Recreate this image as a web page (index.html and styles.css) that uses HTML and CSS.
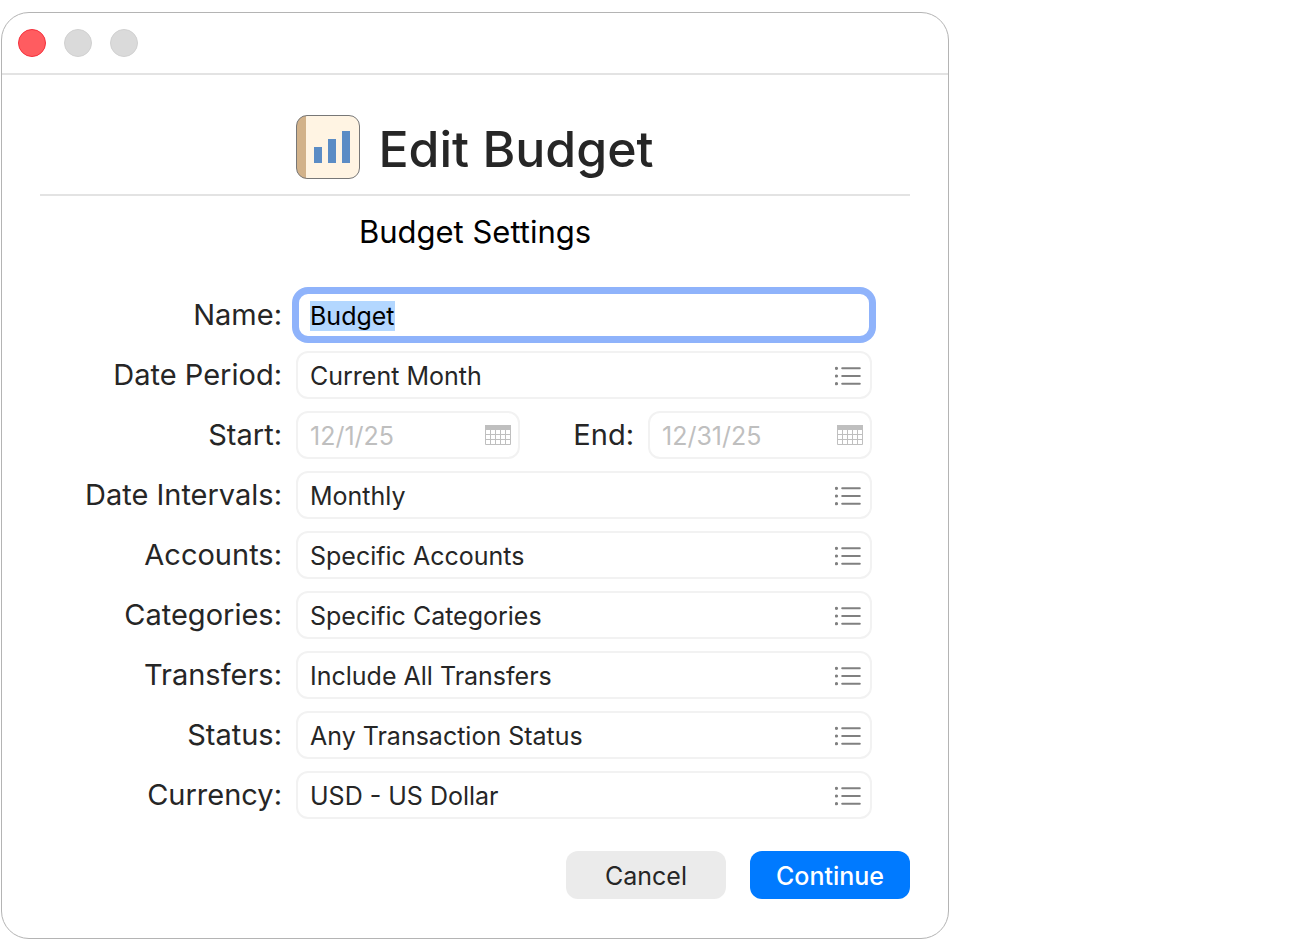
FILE: index.html
```
<!DOCTYPE html>
<html lang="en">
<head>
    <meta charset="utf-8">
    <title>Edit Budget</title>
    <link rel="stylesheet" href="styles.css">
</head>
<body>
    <svg class="symbols" aria-hidden="true">
        <symbol id="list" viewBox="0 0 26 20">
            <g fill="#808080">
                <circle cx="1.5" cy="2.3" r="1.6"/>
                <circle cx="1.5" cy="10" r="1.6"/>
                <circle cx="1.5" cy="17.7" r="1.6"/>
            </g>
            <path d="M7.2 2.3H24.8M7.2 10H24.8M7.2 17.7H24.8" stroke="#808080" stroke-width="2" stroke-linecap="round"/>
        </symbol>
        <symbol id="calendar" viewBox="0 0 26 20">
            <path d="M0 0H26V5H0Z" fill="#bfbfbf"/>
            <path d="M.5 5V19.5H25.5V5M5.5 5V19M10.5 5V19M15.5 5V19M20.5 5V19M0 9.5H26M0 14.5H26" fill="none" stroke="#bfbfbf"/>
        </symbol>
    </svg>

    <div class="window">
        <div class="titlebar">
            <button class="light close" type="button" aria-label="Close"></button>
            <button class="light" type="button" aria-label="Minimize" disabled></button>
            <button class="light" type="button" aria-label="Zoom" disabled></button>
        </div>
        <div class="content">
            <div class="header">
                <svg class="book" viewBox="0 0 64 64" aria-hidden="true">
                    <rect x=".5" y=".5" width="63" height="63" rx="10.5" fill="#fff4e3"/>
                    <path d="M10 .5H11A10.5 10.5 0 0 0 .5 11V53A10.5 10.5 0 0 0 11 63.5H10Z" fill="#d2b28a"/>
                    <rect x="18" y="32" width="8" height="16" fill="#5b8cc5"/>
                    <rect x="32" y="24" width="8" height="24" fill="#5b8cc5"/>
                    <rect x="46" y="16" width="8" height="32" fill="#5b8cc5"/>
                    <rect x=".5" y=".5" width="63" height="63" rx="10.5" fill="none" stroke="#777"/>
                </svg>
                <h1>Edit Budget</h1>
            </div>
            <h2>Budget Settings</h2>
            <form>
                <label for="name">Name:</label>
                <div class="field">
                    <input id="name" type="text" value="Budget" autocomplete="off" spellcheck="false">
                </div>

                <label for="period">Date Period:</label>
                <div class="field">
                    <select id="period"><option>Current Month</option></select>
                    <svg class="icon"><use href="#list"/></svg>
                </div>

                <label for="start">Start:</label>
                <div class="dates">
                    <div class="field">
                        <input id="start" type="text" value="12/1/25" disabled>
                        <svg class="icon calendar"><use href="#calendar"/></svg>
                    </div>
                    <label for="end">End:</label>
                    <div class="field">
                        <input id="end" type="text" value="12/31/25" disabled>
                        <svg class="icon calendar"><use href="#calendar"/></svg>
                    </div>
                </div>

                <label for="intervals">Date Intervals:</label>
                <div class="field">
                    <select id="intervals"><option>Monthly</option></select>
                    <svg class="icon"><use href="#list"/></svg>
                </div>

                <label for="accounts">Accounts:</label>
                <div class="field">
                    <select id="accounts"><option>Specific Accounts</option></select>
                    <svg class="icon"><use href="#list"/></svg>
                </div>

                <label for="categories">Categories:</label>
                <div class="field">
                    <select id="categories"><option>Specific Categories</option></select>
                    <svg class="icon"><use href="#list"/></svg>
                </div>

                <label for="transfers">Transfers:</label>
                <div class="field">
                    <select id="transfers"><option>Include All Transfers</option></select>
                    <svg class="icon"><use href="#list"/></svg>
                </div>

                <label for="status">Status:</label>
                <div class="field">
                    <select id="status"><option>Any Transaction Status</option></select>
                    <svg class="icon"><use href="#list"/></svg>
                </div>

                <label for="currency">Currency:</label>
                <div class="field">
                    <select id="currency"><option>USD - US Dollar</option></select>
                    <svg class="icon"><use href="#list"/></svg>
                </div>
            </form>
            <div class="buttons">
                <button class="btn" type="button">Cancel</button>
                <button class="btn primary" type="button">Continue</button>
            </div>
        </div>
    </div>

    <script>
        const nameInput = document.getElementById('name');
        nameInput.focus();
        nameInput.select();
    </script>
</body>
</html>
```
FILE: styles.css
```
* {
    box-sizing: border-box;
}
body {
    margin: 12px 1px;
    background-color: #fff;
    color: #262626;
    font-family: Inter, "Liberation Sans", sans-serif;
    font-size: 25px;
}
.symbols {
    display: none;
}
.window {
    max-width: 948px;
    border: 1px solid #b4b4b4;
    border-radius: 28px;
}
.titlebar {
    display: flex;
    align-items: center;
    gap: 18px;
    padding: 16px;
    border-bottom: 2px solid #e3e3e3;
}
.light {
    width: 28px;
    height: 28px;
    padding: 0;
    border: 1px solid #d1d1d1;
    border-radius: 50%;
    background-color: #dadada;
}
.light.close {
    border-color: #f5303c;
    background-color: #ff5c60;
}
.content {
    padding: 40px 38px 39px;
}
.header {
    display: flex;
    align-items: center;
    justify-content: center;
    gap: 18px;
    padding-bottom: 15px;
    border-bottom: 2px solid #e3e3e3;
}
.book {
    width: 64px;
    height: 64px;
}
h1 {
    margin: 0;
    padding-top: 4px;
    font-size: 50px;
    font-weight: 500;
    line-height: 60px;
}
h2 {
    margin: 16px 0 39px;
    color: #000;
    font-size: 31px;
    font-weight: 400;
    line-height: 40px;
    text-align: center;
}
form {
    display: grid;
    grid-template-columns: 242px 1fr;
    gap: 12px 14px;
    padding-right: 38px;
}
label {
    font-size: 29px;
    line-height: 48px;
    text-align: right;
}
.field {
    position: relative;
}
.icon {
    position: absolute;
    top: 15px;
    right: 11px;
    width: 26px;
    height: 20px;
    pointer-events: none;
}
.icon.calendar {
    top: 14px;
    right: 9px;
}
input, select {
    display: block;
    width: 100%;
    height: 48px;
    margin: 0;
    padding: 2px 12px 0;
    border: 2px solid #f2f2f2;
    border-radius: 12px;
    appearance: none;
    background-color: #fff;
    color: #262626;
    font-family: inherit;
    font-size: inherit;
}
input:disabled {
    color: #bfbfbf;
}
input:focus {
    border: 3px solid #8fb3fb;
    padding: 2px 11px 0;
    outline: none;
    box-shadow: 0 0 0 4px #8fb3fb;
    color: #000;
}
input::selection {
    background-color: #b3d7ff;
    color: #000;
}
.dates {
    display: flex;
    gap: 14px;
}
.dates .field {
    flex: 0 0 224px;
}
.dates label {
    flex: 1;
}
.buttons {
    display: flex;
    justify-content: flex-end;
    gap: 24px;
    margin-top: 32px;
}
.btn {
    width: 160px;
    height: 48px;
    padding: 2px 0 0;
    border: none;
    border-radius: 12px;
    background-color: #ebebeb;
    color: #262626;
    font-family: inherit;
    font-size: inherit;
}
.btn.primary {
    background-color: #007aff;
    color: #fff;
    font-weight: 500;
}
```
